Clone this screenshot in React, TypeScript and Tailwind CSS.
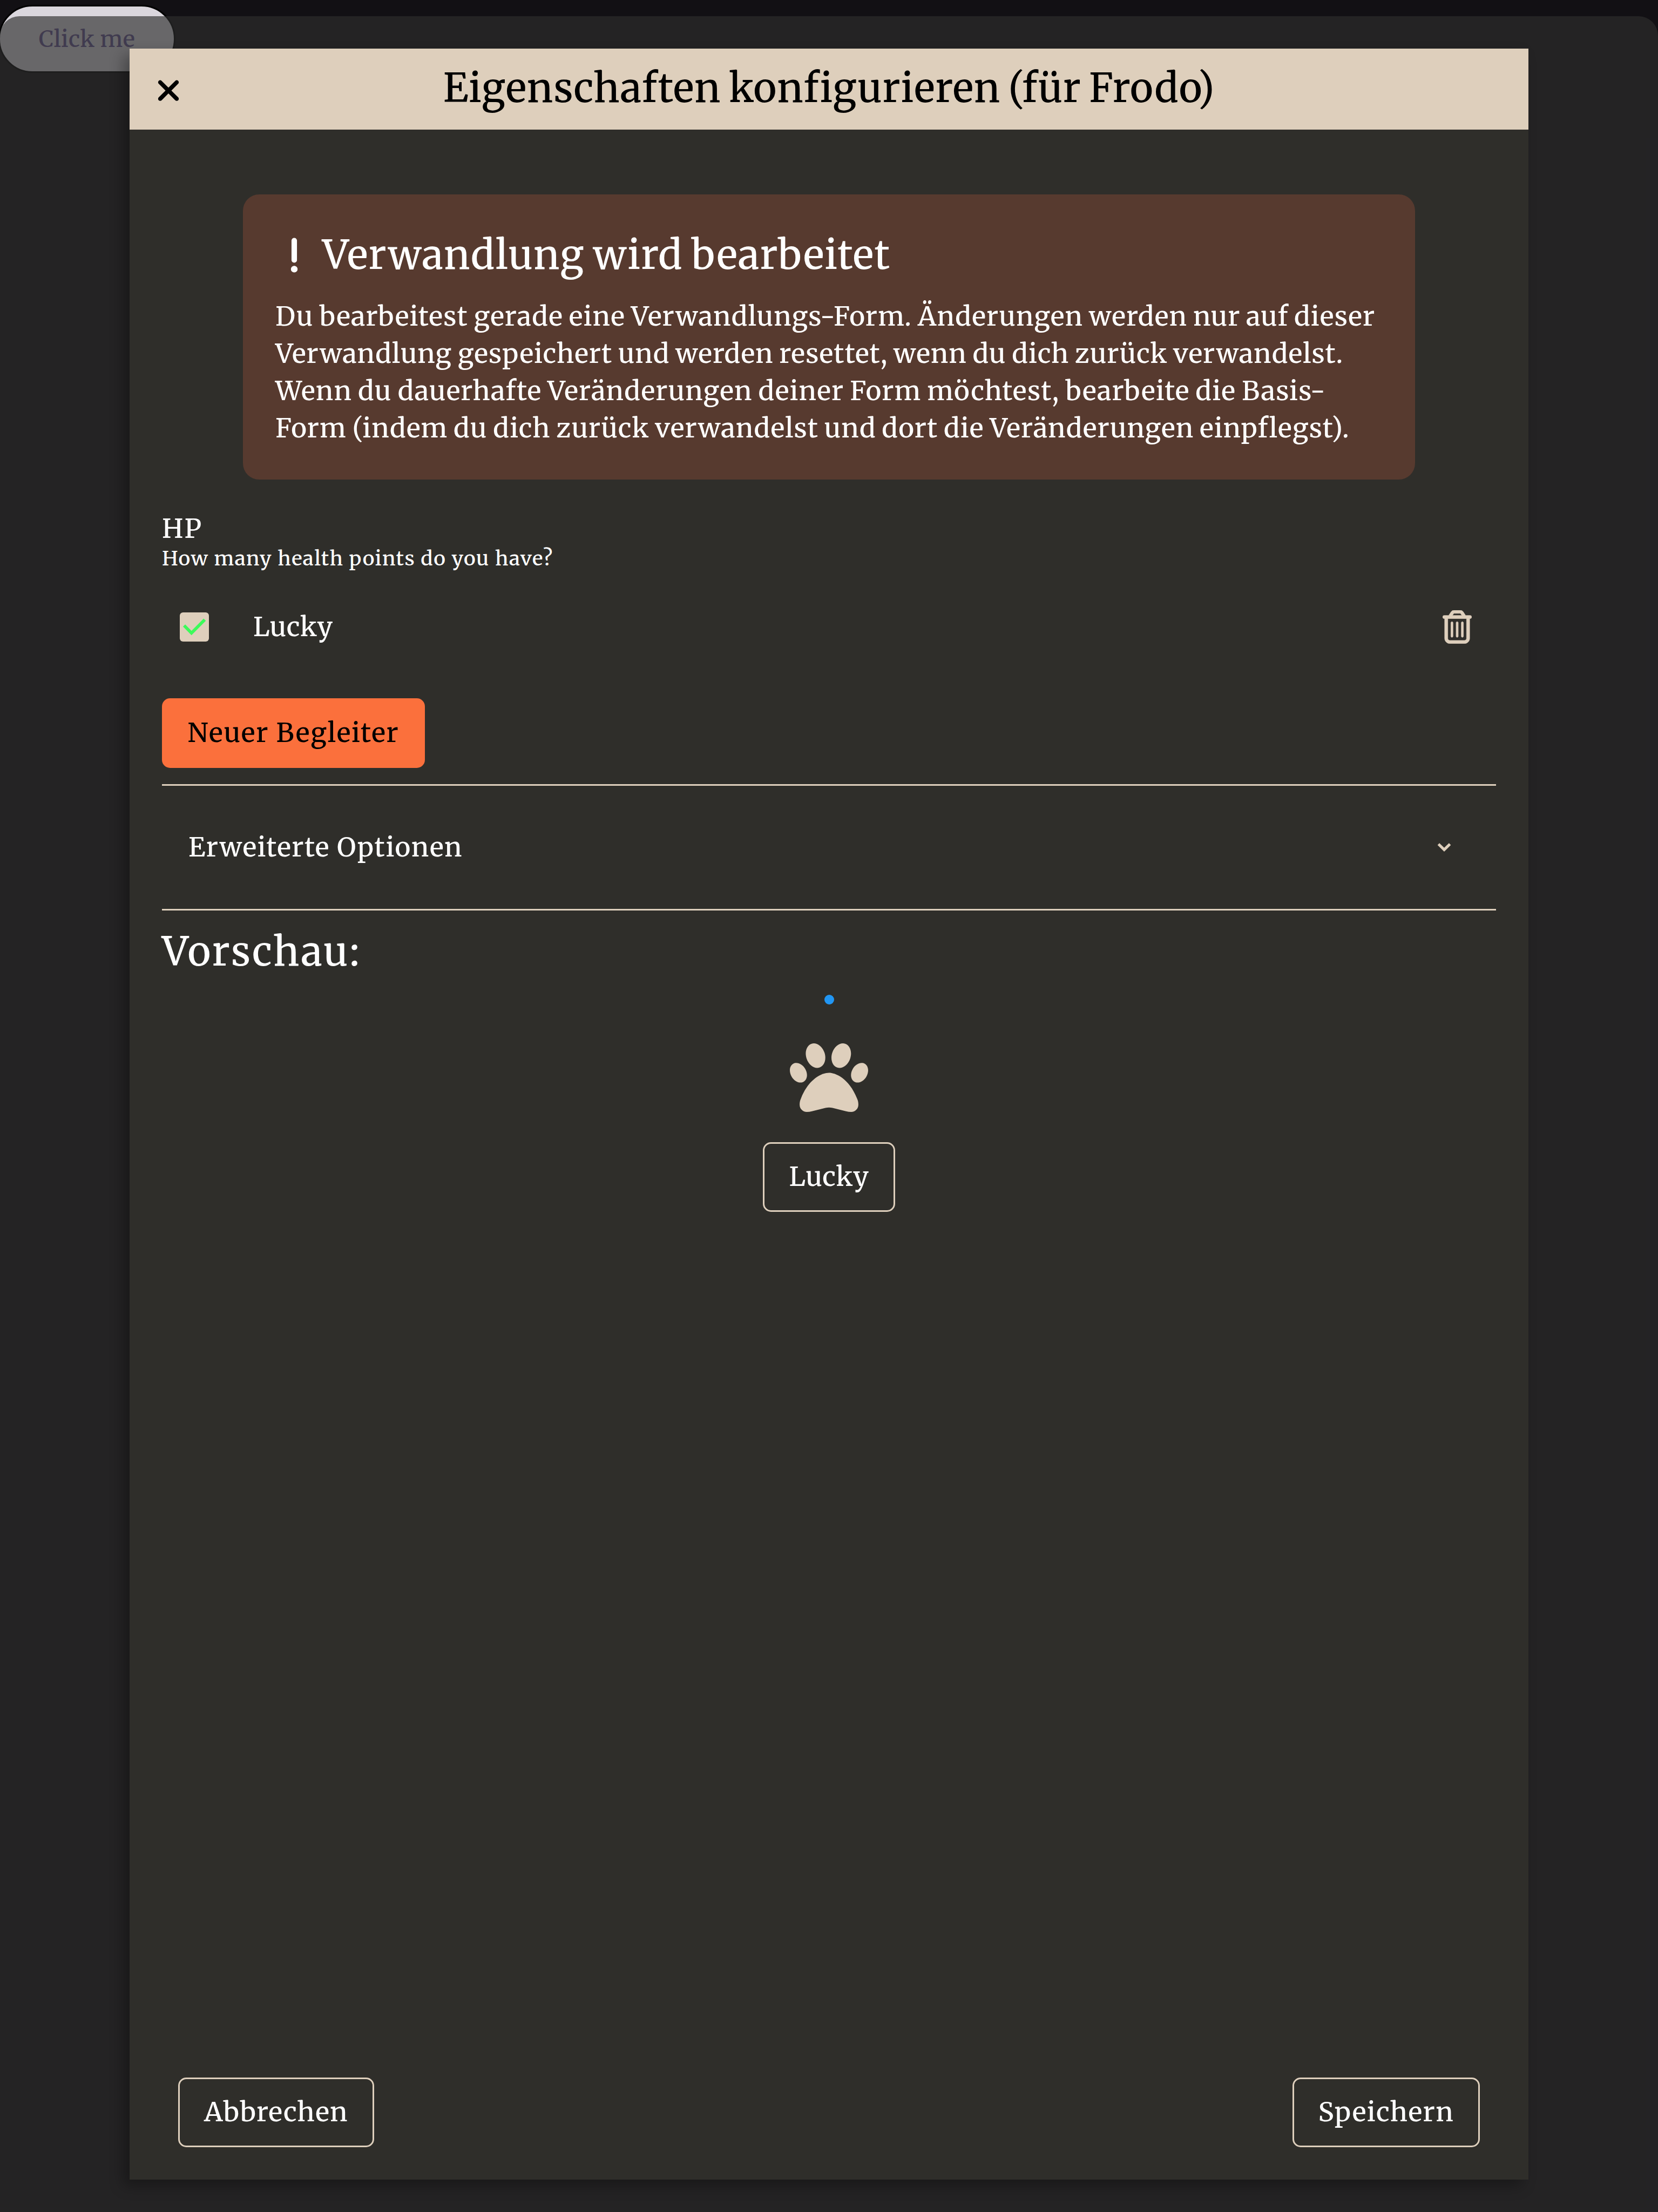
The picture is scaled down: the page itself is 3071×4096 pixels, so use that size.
import { FaPaw, FaRegTrashCan, FaXmark } from "react-icons/fa6";

const BODY = [
  { text: "Du bearbeitest gerade eine Verwandlungs-Form. Änderungen werden nur auf dieser", cls: "tracking-[1.1px]" },
  { text: "Verwandlung gespeichert und werden resettet, wenn du dich zurück verwandelst.", cls: "tracking-[0.97px]" },
  { text: "Wenn du dauerhafte Veränderungen deiner Form möchtest, bearbeite die Basis-", cls: "tracking-[1.18px]" },
  { text: "Form (indem du dich zurück verwandelst und dort die Veränderungen einpflegst).", cls: "tracking-[1.07px]" },
];

function OutlineButton({ label, className }: { label: string; className: string }) {
  return (
    <button className={"flex h-[129px] items-center justify-center rounded-[15px] border-3 border-[#decfbc] pb-[2px] font-medium " + className}>
      {label}
    </button>
  );
}

function Alert() {
  return (
    <section className="mx-auto mt-[120px] h-[528px] w-[2171px] rounded-[30px] bg-[#573a2f] px-[60px] pt-[64px]">
      <div className="flex h-[96px] items-center">
        <svg viewBox="0 0 128 512" className="ml-[26px] h-[73px] w-[18px]" fill="currentColor" stroke="currentColor" strokeWidth="8">
          <path d="M96 64c0-17.7-14.3-32-32-32S32 46.3 32 64V320c0 17.7 14.3 32 32 32s32-14.3 32-32V64zM64 480a40 40 0 1 0 0-80 40 40 0 1 0 0 80z" />
        </svg>
        <h2 className="ml-[43px] text-[73px] leading-[96px] font-medium tracking-[1.3px] [word-spacing:-3px]">Verwandlung wird bearbeitet</h2>
      </div>
      <p className="mt-[31px] leading-[69px] whitespace-nowrap [word-spacing:-2px]">
        {BODY.map((l) => (
          <span key={l.text} className={"block " + l.cls}>{l.text}</span>
        ))}
      </p>
    </section>
  );
}

export default function App() {
  return (
    <div className="relative flex h-[4096px] w-[3071px] flex-col overflow-hidden bg-[#121014] font-['Merriweather','Noto_Serif',serif] text-[49px] font-medium text-white">
      <button className="absolute top-[9px] left-[-3px] flex h-[126px] w-[328px] items-center justify-center rounded-[63px] border-3 border-black bg-[#dad6dd] text-[42px] font-medium tracking-[0.4px] text-[#65558f]">
        Click me
      </button>
      <div className="absolute inset-x-0 top-[30px] bottom-0 rounded-t-[36px] bg-[#2d2d2d]/66" />

      <main className="relative mt-[90px] ml-[240px] flex h-[3946px] w-[2591px] flex-col bg-[#2f2e2a] shadow-[-12px_12px_24px_rgba(0,0,0,0.3)]">
        <header className="relative flex h-[150px] shrink-0 items-center justify-center bg-[#decfbc] text-black">
          <FaXmark className="absolute top-[47px] left-[49px] h-[61.4px] w-[46px]" />
          <h1 className="-mt-[4px] text-[73px] leading-[96px] font-medium tracking-[1px] [word-spacing:-4px]">Eigenschaften konfigurieren (für Frodo)</h1>
        </header>

        <div className="flex grow flex-col px-[60px]">
          <Alert />

          <h3 className="mt-[59px] leading-[63px] font-medium tracking-[2px]">HP</h3>
          <p className="text-[37px] leading-[48px] tracking-[1.4px]">How many health points do you have?</p>

          <div className="mt-[31px] flex h-[144px] items-center pr-[45px] pl-[33px]">
            <span className="size-[54px] rounded-[6px] bg-[#decfbc]">
              <svg viewBox="0 0 54 54" className="size-full" fill="none" stroke="#3bfb5a" strokeWidth="5.8">
                <path d="M8 24.3 21.7 38.2 46.2 13.5" />
              </svg>
            </span>
            <span className="ml-[82px] grow tracking-[0.7px]">Lucky</span>
            <FaRegTrashCan className="h-[61.7px] w-[54px] text-[#decfbc]" strokeWidth={6} stroke="currentColor" />
          </div>

          <button className="mt-[60px] flex h-[129px] w-[487px] shrink-0 items-center justify-center rounded-[15px] bg-[#fb703c] pb-[2px] font-medium tracking-[1.8px] text-black">
            Neuer Begleiter
          </button>

          <div className="mt-[30px] flex h-[234px] shrink-0 items-center justify-between border-y-3 border-[#decfbc] pr-[78px] pl-[49px]">
            <span className="tracking-[1.5px]">Erweiterte Optionen</span>
            <svg viewBox="0 0 36 36" className="size-[36px]" fill="none" stroke="#decfbc" strokeWidth="5">
              <path d="M7.4 12 18 22.4 28.6 12" />
            </svg>
          </div>

          <h2 className="mt-[28px] text-[73px] leading-[96px] font-medium tracking-[3px]">Vorschau:</h2>
          <div className="flex flex-col items-center pt-[32px]">
            <span className="size-[18px] rounded-full bg-[#2196f3]" />
            <FaPaw className="mt-[63px] size-[145px] text-[#decfbc]" />
            <OutlineButton label="Lucky" className="mt-[47px] w-[245px] tracking-[0.7px]" />
          </div>
        </div>

        <footer className="flex shrink-0 justify-between px-[90px] pb-[60px]">
          <OutlineButton label="Abbrechen" className="w-[363px] tracking-[1.3px]" />
          <OutlineButton label="Speichern" className="w-[347px] tracking-[1.5px]" />
        </footer>
      </main>
    </div>
  );
}
